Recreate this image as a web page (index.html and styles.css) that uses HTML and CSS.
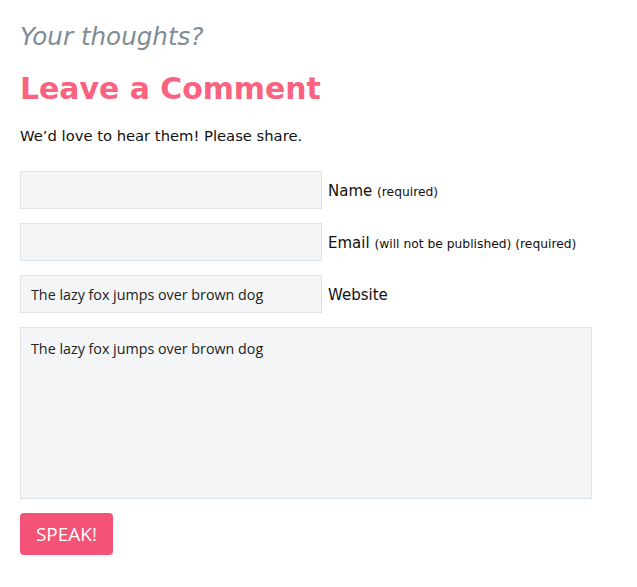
FILE: index.html
```html
<!DOCTYPE html>
<html>
<head>
<meta charset="utf-8">
<link rel="stylesheet" href="styles.css">
</head>
<body>
<div class="respond">
  <h3 class="thoughts">Your thoughts?</h3>
  <h2 class="title">Leave a Comment</h2>
  <p class="intro">We’d love to hear them! Please share.</p>
  <form class="form">
    <div class="row">
      <input class="field" type="text">
      <label class="label">Name <small>(required)</small></label>
    </div>
    <div class="row">
      <input class="field" type="text">
      <label class="label">Email <small>(will not be published) (required)</small></label>
    </div>
    <div class="row">
      <input class="field" type="text" value="The lazy fox jumps over brown dog">
      <label class="label">Website</label>
    </div>
    <textarea class="area">The lazy fox jumps over brown dog</textarea>
    <button class="submit" type="button">SPEAK!</button>
  </form>
</div>
</body>
</html>
```
FILE: styles.css
```css
html, body {
  margin: 0;
  padding: 0;
  background: #ffffff;
}
body {
  font-family: "DejaVu Sans", Verdana, sans-serif;
  color: #111;
}
.respond {
  padding: 20px 20px 20px 20px;
  width: 572px;
}
.thoughts {
  margin: 0;
  font-size: 24.6px;
  font-style: italic;
  font-weight: normal;
  color: #7f8b95;
  line-height: 34px;
}
.title {
  margin: 16px 0 0 0;
  font-size: 29.9px;
  font-weight: bold;
  color: #fa6380;
  line-height: 38px;
}
.intro {
  margin: 17px 0 0 0;
  font-size: 14.75px;
  line-height: 22px;
}
.form {
  margin-top: 24px;
  display: flex;
  flex-direction: column;
  gap: 14px;
}
.row {
  display: flex;
  align-items: center;
  gap: 6px;
}
.field {
  box-sizing: border-box;
  width: 302px;
  height: 38px;
  margin: 0;
  padding: 0 10px;
  background: #f3f5f7;
  border: 1px solid #dde3e6;
  border-radius: 0;
  font-family: "Open Sans", sans-serif;
  font-size: 14.3px;
  color: #222;
  outline: none;
}
.label {
  font-size: 15px;
  color: #111;
  padding-top: 2px;
}
.label small {
  font-size: 12.3px;
}
.area {
  box-sizing: border-box;
  width: 572px;
  height: 172px;
  margin: 0;
  padding: 10px 10px;
  background: #f3f5f7;
  border: 1px solid #dde3e6;
  font-family: "Open Sans", sans-serif;
  font-size: 14.3px;
  line-height: 22px;
  color: #222;
  resize: none;
  outline: none;
  display: block;
}
.submit {
  align-self: flex-start;
  box-sizing: border-box;
  width: 93px;
  height: 42px;
  margin: 0;
  padding: 0;
  background: #f45377;
  border: none;
  border-radius: 4px;
  color: #fff;
  font-family: "Open Sans", sans-serif;
  font-size: 19px;
}
```
